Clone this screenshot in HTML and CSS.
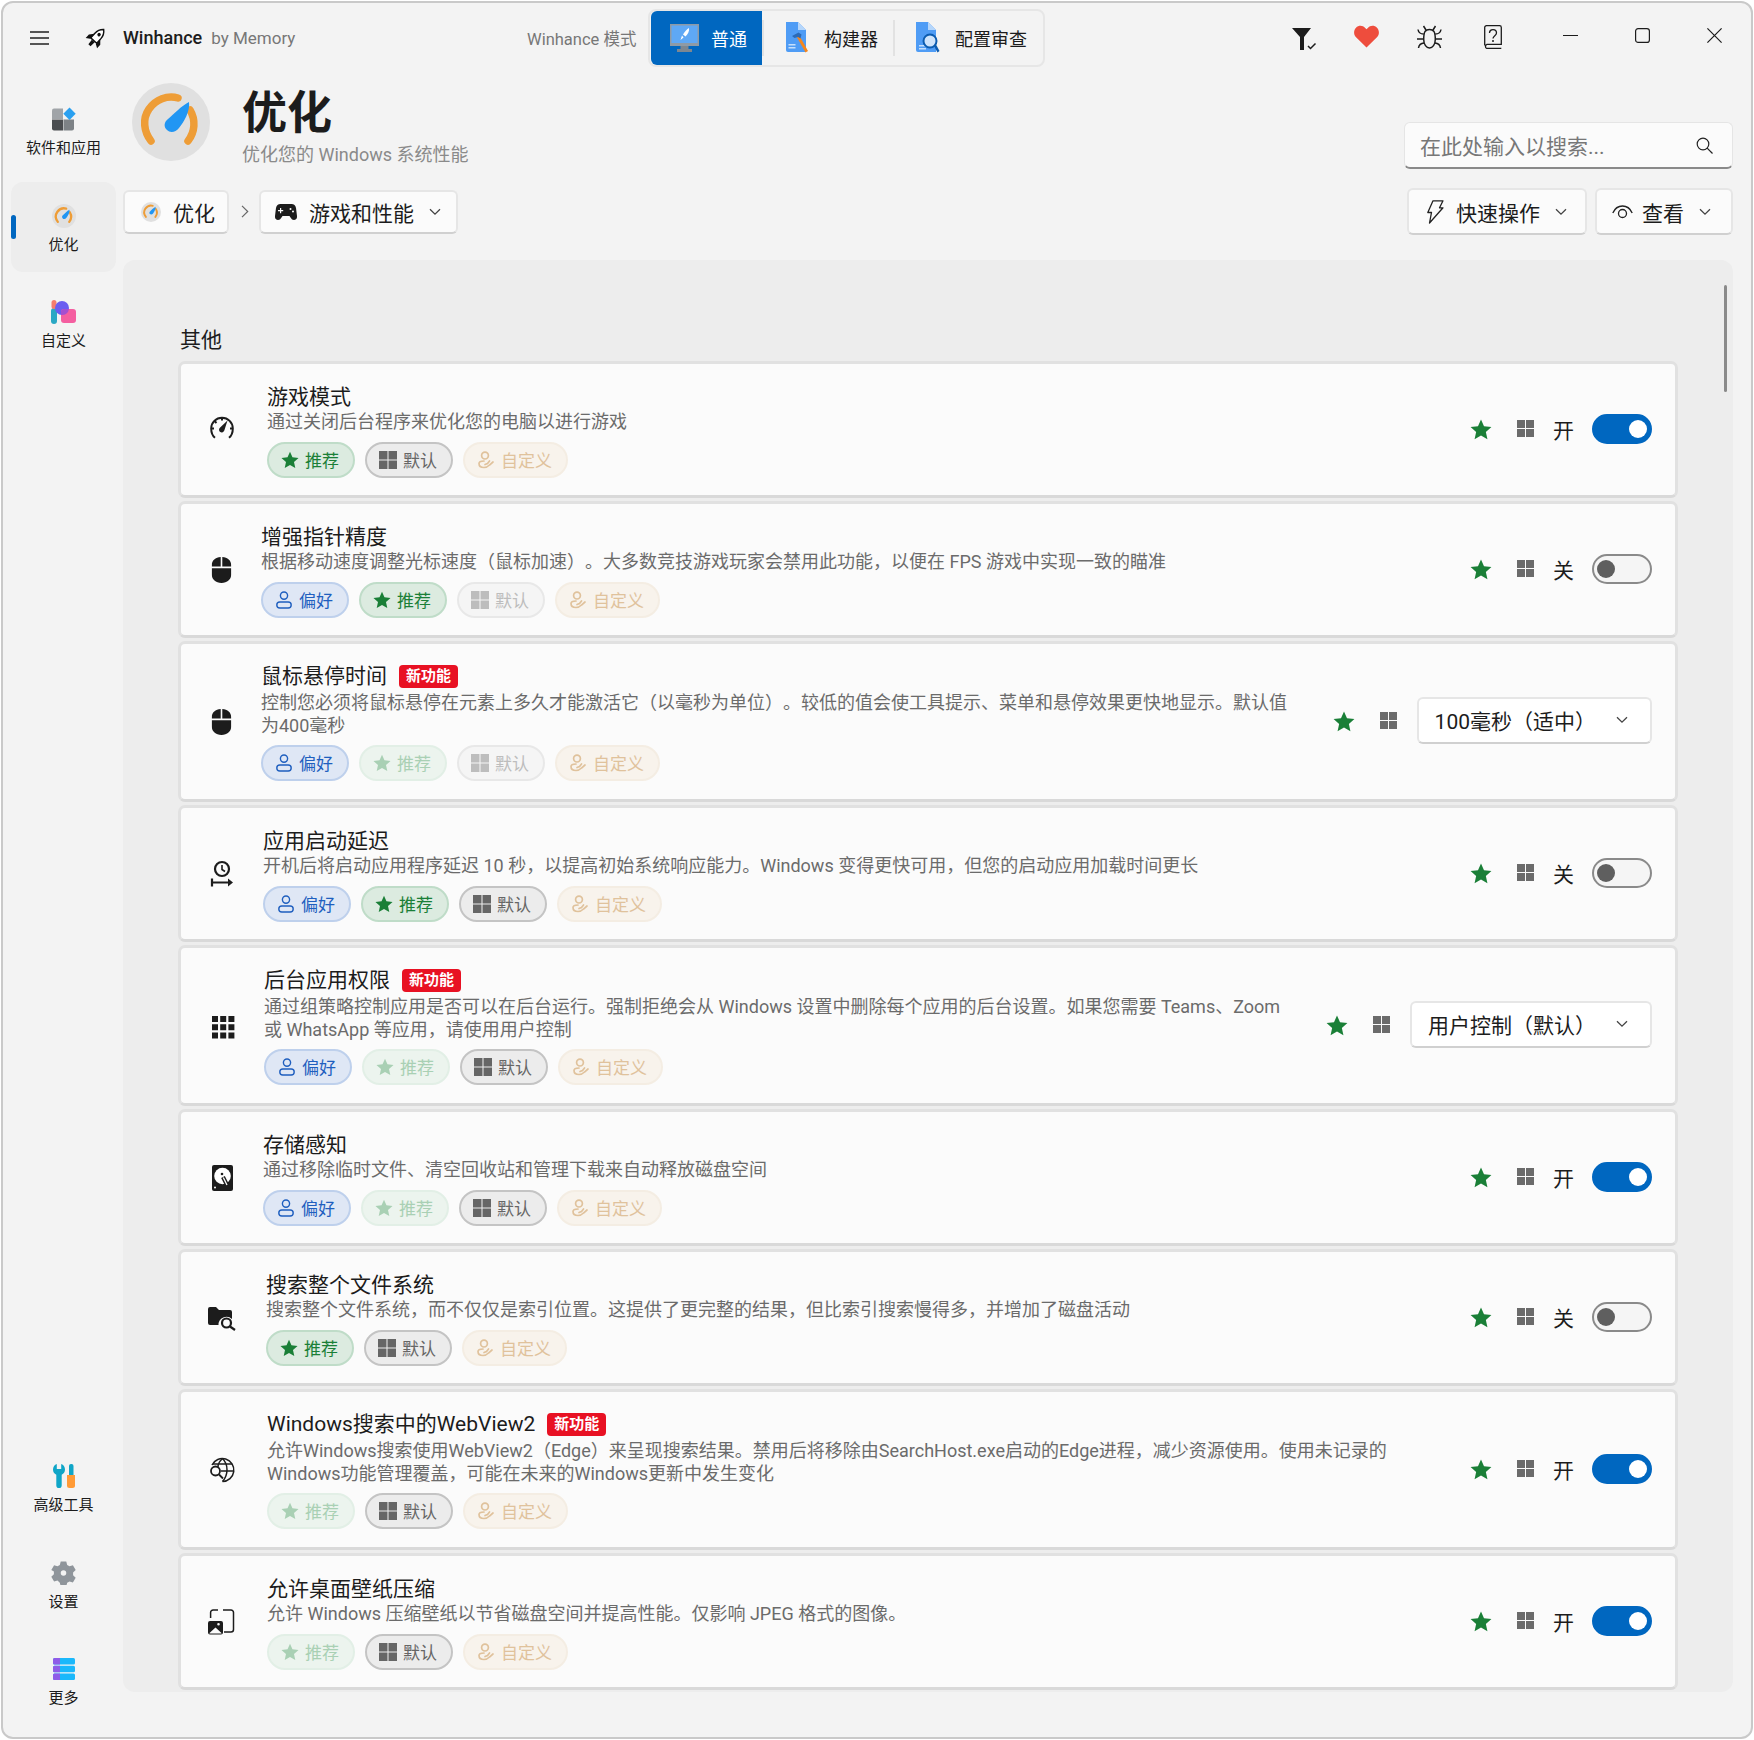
FILE: index.html
```html
<!DOCTYPE html>
<html lang="zh-CN">

<head>
    <meta charset="UTF-8">
    <meta name="viewport" content="width=device-width, initial-scale=1.0">
    <title>Winhance</title>
    <link rel="stylesheet" href="styles.css">
</head>

<body>
    <!-- Icônes réutilisées -->
    <svg class="sprite" aria-hidden="true">
        <symbol id="i-star" viewBox="0 0 24 23"><path fill="currentColor" d="M12 .5l3.290 7.470 8.120.82-6.080 5.440 1.720 7.980L12 18.100l-7.050 4.110 1.720-7.980L.59 8.790l8.120-.82z"/></symbol>
        <symbol id="i-grid" viewBox="0 0 17 17"><path fill="currentColor" d="M0 0h8v8H0zM9 0h8v8H9zM0 9h8v8H0zM9 9h8v8H9z"/></symbol>
        <symbol id="i-person" viewBox="0 0 18 18"><g fill="none" stroke="currentColor" stroke-width="1.400"><circle cx="9" cy="4.600" r="3.600"/><rect x="1.800" y="11" width="14.400" height="6" rx="3"/></g></symbol>
        <symbol id="i-custom" viewBox="0 0 18 18"><g fill="none" stroke="currentColor" stroke-width="1.700" stroke-linecap="round"><circle cx="8" cy="4.600" r="3.400"/><path d="M2 12.500c0-2 2.500-2.500 5-2.500M2 12.500c0 2.500 2 4 5 4 3 0 4-1 5.500-2.500l3.500-3"/><path d="M8 13.500l2.500-1 2-2.500"/></g></symbol>
        <symbol id="i-chev" viewBox="0 0 12 8"><path fill="none" stroke="currentColor" stroke-width="1.300" d="M1 1.200l5 5 5-5"/></symbol>
        <symbol id="i-mouse" viewBox="0 0 20 26"><path fill="currentColor" d="M9.200 0v9.500H.3V8.200C.3 3.500 4 .2 9.200 0zM10.800 0c5.200.2 8.900 3.500 8.900 8.200v1.300h-8.900zM.3 11.200h19.400v6.300c0 4.900-4 8.500-9.700 8.500S.3 22.400.3 17.500z"/></symbol>
        <symbol id="i-gauge" viewBox="0 0 78 78">
            <circle cx="39" cy="39" r="39" fill="#e0e0e0"/>
            <path fill="none" stroke="#ee9d37" stroke-width="7.500" stroke-linecap="round" d="M19 58C12 49 10 36 17 26c7-9.500 18-14 29-11"/>
            <path fill="none" stroke="#ee9d37" stroke-width="7.500" stroke-linecap="round" d="M58 27c6 10 5 22-2 31"/>
            <path fill="#2196f3" d="M57 19c1.300 9-5 20-10 26-3.500 4.500-9 5-12 2-3.500-3-3-8 1-11 6-5 13-13 21-17z"/>
        </symbol>
    </svg>

    <div class="window">
        <!-- Barre de titre -->
        <header class="titlebar">
            <div class="brand">
                <svg class="menu-icon" width="19" height="14" viewBox="0 0 19 14"><path fill="none" stroke="#222" stroke-width="1.300" d="M0 1h19M0 7h19M0 13h19"/></svg>
                <svg class="app-logo" width="23" height="23" viewBox="0 0 24 24">
                    <g transform="rotate(42 12 12)">
                        <path fill="#fff" stroke="#111" stroke-width="1.500" d="M12 .8c3.200 2.700 4.200 6 4.200 9v6.500H7.800V9.800c0-3 1-6.300 4.200-9z"/>
                        <circle cx="12" cy="8" r="1.800" fill="#111"/>
                        <path fill="#111" d="M8 10.500L4 15v5l4-2.500zM16 10.500l4 4.500v5l-4-2.500zM10 17h4l-.5 6h-3z"/>
                    </g>
                </svg>
                <span class="app-name">Winhance</span>
                <span class="app-by">by Memory</span>
            </div>
            <span class="mode-label">Winhance 模式</span>
            <nav class="mode-tabs">
                <a class="mode-tab active">
                    <svg width="29" height="28" viewBox="0 0 29 28">
                        <path fill="#8e9aa6" d="M0 0h29v22H0z"/>
                        <path fill="#5fa8f5" d="M1.500 1.500h26V19h-26z"/>
                        <path fill="#7d8791" d="M10.500 22h8v3h-8zM7 25h15v3H7z"/>
                        <path fill="#fff" d="M19 4c.5 3-1 6-3.500 8.500L13 10.500C15 7.500 17 5 19 4zM12 11.500l1.500 2-3 2.500z"/>
                    </svg>
                    <span>普通</span>
                </a>
                <i class="mode-sep"></i>
                <a class="mode-tab">
                    <svg width="24" height="32" viewBox="0 0 24 32">
                        <path fill="#4f9cf5" d="M1 0h12l8 8v22H3a2 2 0 0 1-2-2z"/>
                        <path fill="#b5d6fb" d="M13 0l8 8h-8z"/>
                        <path fill="#c6dffc" d="M3.500 22h7v1.500h-7zM3.500 25h7v1.500h-7z"/>
                        <path fill="#f7861c" d="M11.500 14.500l2.500-1.500 9 16-2.500 1.500z"/>
                        <path fill="#2c6bb8" d="M7 14l6.500-3.500 3 2-1 4-2.500-1.500-3.500 1z"/>
                    </svg>
                    <span>构建器</span>
                </a>
                <i class="mode-sep"></i>
                <a class="mode-tab">
                    <svg width="24" height="32" viewBox="0 0 24 32">
                        <path fill="#4f9cf5" d="M0 0h12l8 8v22H2a2 2 0 0 1-2-2z"/>
                        <path fill="#b5d6fb" d="M12 0l8 8h-8z"/>
                        <path fill="#c6dffc" d="M3 23h7v1.500H3zM3 26h7v1.500H3z"/>
                        <circle cx="14" cy="19" r="6.500" fill="#cfe4fb" stroke="#0c5cb0" stroke-width="2"/>
                        <path fill="#0c5cb0" d="M18 24l2-1.500 3.500 6.500-2 1.500z"/>
                    </svg>
                    <span>配置审查</span>
                </a>
            </nav>
            <div class="title-tools">
                <span class="tool-btn">
                    <svg class="filter-icon" width="26" height="22" viewBox="0 0 26 22"><path fill="#1c1c1c" d="M0 0h19l-7 9v13H8V9z"/><path fill="none" stroke="#1c1c1c" stroke-width="1.500" d="M16 18l2.500 2.500 5-5"/></svg>
                </span>
                <span class="tool-btn">
                    <svg width="25" height="23" viewBox="0 0 25 23"><path fill="#ee4d3d" d="M12.500 22.500L1.800 12C-.5 9.500-.5 5.200 2 2.700c2.600-2.600 6.800-2.400 9.200.2l1.300 1.400 1.300-1.400c2.400-2.600 6.600-2.800 9.200-.2 2.500 2.500 2.500 6.800.2 9.300z"/></svg>
                </span>
                <span class="tool-btn">
                    <svg width="25" height="24" viewBox="0 0 25 24"><g fill="none" stroke="#1c1c1c" stroke-width="1.500"><path d="M8 6.500c1-1.500 2.500-2 4.500-2s3.500.5 4.500 2c1 1.800 1.300 5 1.300 8 0 5-2.800 8.500-5.800 8.500s-5.800-3.500-5.800-8.500c0-3 .3-6.200 1.300-8z"/><path d="M9 5L6.500 1M16 5l2.500-4M6.700 9C3.500 9 1.500 7.500 1 4.500M18.300 9c3.200 0 5.200-1.500 5.700-4.500M6.500 14H0M18.500 14H25M7 18c-3 .2-5 1.800-5.500 5M18 18c3 .2 5 1.800 5.500 5"/></g></svg>
                </span>
                <span class="tool-btn">
                    <svg width="18" height="24" viewBox="0 0 18 24"><g fill="none" stroke="#1c1c1c" stroke-width="1.300"><path d="M.7 20.500V2.500a1.800 1.800 0 0 1 1.800-1.800h13a1.800 1.800 0 0 1 1.800 1.800v16.800H3a2.200 2.200 0 0 0 0 4.200h14.300"/><path d="M5.500 8c0-4.500 7-4.500 7 0 0 2.500-3.500 2.800-3.500 5.500"/></g><circle cx="9" cy="16" r="1" fill="#1c1c1c"/></svg>
                </span>
            </div>
            <div class="win-controls">
                <span class="win-btn"><svg width="15" height="15" viewBox="0 0 15 15"><path stroke="#1c1c1c" stroke-width="1.200" d="M0 7.500h15"/></svg></span>
                <span class="win-btn"><svg width="15" height="15" viewBox="0 0 15 15"><rect x=".6" y=".6" width="13.800" height="13.800" rx="2.500" fill="none" stroke="#1c1c1c" stroke-width="1.200"/></svg></span>
                <span class="win-btn"><svg width="15" height="15" viewBox="0 0 15 15"><path stroke="#1c1c1c" stroke-width="1.200" d="M.4.400l14.200 14.200M14.600.400L.4 14.600"/></svg></span>
            </div>
        </header>

        <div class="layout">
            <!-- Navigation latérale -->
            <aside class="sidebar">
                <div class="nav-group">
                    <a class="nav-item">
                        <svg width="24" height="23" viewBox="0 0 24 23">
                            <path fill="#a0a4a8" d="M0 3a2 2 0 0 1 2-2h9v10.500H0z"/>
                            <path fill="#4a4d50" d="M0 12h11v11H2a2 2 0 0 1-2-2z"/>
                            <path fill="#7d8286" d="M11.500 12H22v9a2 2 0 0 1-2 2h-8.500z"/>
                            <path fill="#2aa0f0" d="M17.500 0l6.200 6.200-6.200 6.200-6.200-6.200z"/>
                        </svg>
                        <span>软件和应用</span>
                    </a>
                    <a class="nav-item active">
                        <svg width="24" height="24"><use href="#i-gauge"/></svg>
                        <span>优化</span>
                    </a>
                    <a class="nav-item">
                        <svg width="25" height="24" viewBox="0 0 25 24">
                            <rect x="0" y="8" width="6" height="16" rx="3" fill="#2aa8c4"/>
                            <rect x="0.500" y="0" width="5" height="9" rx="2.500" fill="#f47c6e"/>
                            <circle cx="11" cy="8" r="7" fill="#6a5df0"/>
                            <rect x="10" y="9" width="15" height="14" rx="3" fill="#f45ea0"/>
                            <path fill="#a44fd0" d="M10 12a3 3 0 0 1 3-3h5a7 7 0 0 1-8 6z"/>
                        </svg>
                        <span>自定义</span>
                    </a>
                </div>
                <div class="nav-group">
                    <a class="nav-item">
                        <svg width="22" height="24" viewBox="0 0 22 24">
                            <path fill="#0fa5c7" d="M3.800 0v5h4.400V0C10.500.8 12 3 12 5.500c0 2.500-1.300 4.300-3.300 5.200v10.800a2.700 2.700 0 0 1-5.400 0V10.700C1.300 9.800 0 8 0 5.500 0 3 1.500.8 3.800 0z"/>
                            <rect x="16" y="0" width="4.500" height="13" rx="2" fill="#0fa5c7"/>
                            <path fill="#ff9a36" d="M14 11h8v10.500a2.500 2.500 0 0 1-2.500 2.500h-3a2.500 2.500 0 0 1-2.500-2.500z"/>
                        </svg>
                        <span>高级工具</span>
                    </a>
                    <a class="nav-item">
                        <svg width="25" height="26" viewBox="0 0 25 26"><path fill="#8f959b" fill-rule="evenodd" d="M9.500.5h6l1 3.800 2.500 1.400 3.700-1.100 3 5.200-2.800 2.700v2.900l2.800 2.700-3 5.200-3.700-1.100-2.500 1.400-1 3.800h-6l-1-3.800L6 21.200l-3.700 1.100-3-5.200 2.800-2.700v-2.900L-.7 9.800l3-5.200L6 5.700l2.500-1.400zM12.500 10a3 3 0 1 0 0 6 3 3 0 0 0 0-6z"/></svg>
                        <span>设置</span>
                    </a>
                    <a class="nav-item">
                        <svg width="22" height="22" viewBox="0 0 22 22">
                            <rect y="0" width="22" height="6.500" rx="1.500" fill="#1bb8fb"/>
                            <rect y="7.700" width="22" height="6.500" rx="1.500" fill="#1bb8fb"/>
                            <rect y="15.500" width="22" height="6.500" rx="1.500" fill="#1bb8fb"/>
                            <path fill="#8f5be8" d="M1.500 0H7v6.500H1.500A1.500 1.500 0 0 1 0 5V1.500A1.500 1.500 0 0 1 1.500 0zM1.500 7.700H7v6.500H1.500A1.500 1.500 0 0 1 0 12.700V9.200a1.500 1.500 0 0 1 1.500-1.500zM1.500 15.500H7V22H1.500A1.500 1.500 0 0 1 0 20.500V17a1.500 1.500 0 0 1 1.500-1.500z"/>
                        </svg>
                        <span>更多</span>
                    </a>
                </div>
            </aside>

            <main class="main">
                <!-- En-tête de la page -->
                <div class="page-head">
                    <svg class="page-icon" width="78" height="78"><use href="#i-gauge"/></svg>
                    <div class="page-title">
                        <h1>优化</h1>
                        <p>优化您的 Windows 系统性能</p>
                    </div>
                    <div class="search-box">
                        <span>在此处输入以搜索...</span>
                        <svg width="17" height="17" viewBox="0 0 17 17"><g fill="none" stroke="#222" stroke-width="1.200"><circle cx="7" cy="7" r="5.800"/><path d="M11.200 11.200l5.300 5.300"/></g></svg>
                    </div>
                </div>

                <!-- Fil d'Ariane et actions -->
                <div class="toolbar">
                    <a class="crumb crumb-first">
                        <svg width="20" height="20"><use href="#i-gauge"/></svg>
                        <span>优化</span>
                    </a>
                    <svg class="crumb-sep" width="8" height="13" viewBox="0 0 8 13"><path fill="none" stroke="#666" stroke-width="1.200" d="M1 .8l5.700 5.700L1 12.200"/></svg>
                    <a class="crumb">
                        <svg width="22" height="16" viewBox="0 0 22 16"><path fill="#1c1c1c" fill-rule="evenodd" d="M5.500 0h11c2.500 0 4 1.500 4.500 4l1 8c.3 2.500-1.200 4-3 4-1.500 0-2.500-.8-3.500-2.500l-1-1.500h-7l-1 1.500C5.500 15.200 4.500 16 3 16c-1.800 0-3.300-1.500-3-4l1-8c.5-2.500 2-4 4.500-4zM5 4v2H3v1.200h2v2h1.200v-2h2V6h-2V4zm10.500 0a1 1 0 1 0 0 2 1 1 0 0 0 0-2zm2.500 2.500a1 1 0 1 0 0 2 1 1 0 0 0 0-2z"/></svg>
                        <span>游戏和性能</span>
                        <svg class="chev" width="12" height="8"><use href="#i-chev"/></svg>
                    </a>
                    <div class="toolbar-actions">
                        <a class="action-btn">
                            <svg width="17" height="24" viewBox="0 0 17 24"><path fill="none" stroke="#222" stroke-width="1.300" stroke-linejoin="round" d="M6 .8h10l-3.500 7h3.500L2.500 23l2-10.500H.8z"/></svg>
                            <span>快速操作</span>
                            <svg class="chev" width="12" height="8"><use href="#i-chev"/></svg>
                        </a>
                        <a class="action-btn action-view">
                            <svg width="21" height="14" viewBox="0 0 21 14"><g fill="none" stroke="#222" stroke-width="1.300"><path d="M.8 8C3 3 6.500 1 10.500 1s7.500 2 9.700 7"/><circle cx="10.500" cy="8.500" r="4"/></g></svg>
                            <span>查看</span>
                            <svg class="chev" width="12" height="8"><use href="#i-chev"/></svg>
                        </a>
                    </div>
                </div>

                <!-- Liste des réglages -->
                <section class="pane">
                    <i class="scroll-thumb"></i>
                    <h2 class="section-title">其他</h2>

                    <article class="card">
                        <svg class="card-icon" width="29" height="26" viewBox="0 0 29 26"><g fill="none" stroke="#1c1c1c" stroke-width="2"><path d="M7 20.800C4.500 18.800 3.200 15.500 3.200 11.500a10.800 10.800 0 0 1 21.600 0c0 4-1.300 7.300-3.800 9.300"/><path d="M14 1v2.500M3.500 11.500H6M24.500 11.500H22M6.800 4.300l1.700 1.700"/></g><path fill="#1c1c1c" d="M19.500 3.500l-3.200 10a2.700 2.700 0 1 1-4.400-2.800z"/></svg>
                        <div class="card-body">
                            <h3 class="card-title">游戏模式</h3>
                            <p class="card-desc">通过关闭后台程序来优化您的电脑以进行游戏</p>
                            <div class="pills">
                                <span class="pill pill-rec"><svg><use href="#i-star"/></svg>推荐</span>
                                <span class="pill pill-def"><svg><use href="#i-grid"/></svg>默认</span>
                                <span class="pill pill-cus"><svg><use href="#i-custom"/></svg>自定义</span>
                            </div>
                        </div>
                        <svg class="side-star"><use href="#i-star"/></svg>
                        <svg class="side-grid"><use href="#i-grid"/></svg>
                        <span class="state">开</span>
                        <span class="toggle on"></span>
                    </article>

                    <article class="card">
                        <svg class="card-icon" width="23" height="26" viewBox="0 0 23 26"><svg x="3.500" width="20" height="26"><use href="#i-mouse"/></svg></svg>
                        <div class="card-body">
                            <h3 class="card-title">增强指针精度</h3>
                            <p class="card-desc">根据移动速度调整光标速度（鼠标加速）。大多数竞技游戏玩家会禁用此功能，以便在 FPS 游戏中实现一致的瞄准</p>
                            <div class="pills">
                                <span class="pill pill-pref"><svg><use href="#i-person"/></svg>偏好</span>
                                <span class="pill pill-rec"><svg><use href="#i-star"/></svg>推荐</span>
                                <span class="pill pill-def off"><svg><use href="#i-grid"/></svg>默认</span>
                                <span class="pill pill-cus"><svg><use href="#i-custom"/></svg>自定义</span>
                            </div>
                        </div>
                        <svg class="side-star"><use href="#i-star"/></svg>
                        <svg class="side-grid"><use href="#i-grid"/></svg>
                        <span class="state">关</span>
                        <span class="toggle"></span>
                    </article>

                    <article class="card">
                        <svg class="card-icon" width="23" height="26" viewBox="0 0 23 26"><svg x="3.500" width="20" height="26"><use href="#i-mouse"/></svg></svg>
                        <div class="card-body">
                            <h3 class="card-title has-badge">鼠标悬停时间<span class="badge">新功能</span></h3>
                            <p class="card-desc">控制您必须将鼠标悬停在元素上多久才能激活它（以毫秒为单位）。较低的值会使工具提示、菜单和悬停效果更快地显示。默认值<br>为400毫秒</p>
                            <div class="pills">
                                <span class="pill pill-pref"><svg><use href="#i-person"/></svg>偏好</span>
                                <span class="pill pill-rec off"><svg><use href="#i-star"/></svg>推荐</span>
                                <span class="pill pill-def off"><svg><use href="#i-grid"/></svg>默认</span>
                                <span class="pill pill-cus"><svg><use href="#i-custom"/></svg>自定义</span>
                            </div>
                        </div>
                        <svg class="side-star"><use href="#i-star"/></svg>
                        <svg class="side-grid before-select"><use href="#i-grid"/></svg>
                        <div class="select">
                            <span>100毫秒（适中）</span>
                            <svg class="chev" width="12" height="8"><use href="#i-chev"/></svg>
                        </div>
                    </article>

                    <article class="card">
                        <svg class="card-icon" width="25" height="26" viewBox="0 0 25 26"><g fill="none" stroke="#1c1c1c"><circle cx="14" cy="8" r="7" stroke-width="2.200"/><path stroke-width="1.600" d="M14 4v4.500l3 2"/><path stroke-width="2.200" d="M4 21.500h19M4 17.500v8"/></g><path fill="#1c1c1c" d="M20 17.500l5 4-5 4z"/></svg>
                        <div class="card-body">
                            <h3 class="card-title">应用启动延迟</h3>
                            <p class="card-desc">开机后将启动应用程序延迟 10 秒，以提高初始系统响应能力。Windows 变得更快可用，但您的启动应用加载时间更长</p>
                            <div class="pills">
                                <span class="pill pill-pref"><svg><use href="#i-person"/></svg>偏好</span>
                                <span class="pill pill-rec"><svg><use href="#i-star"/></svg>推荐</span>
                                <span class="pill pill-def"><svg><use href="#i-grid"/></svg>默认</span>
                                <span class="pill pill-cus"><svg><use href="#i-custom"/></svg>自定义</span>
                            </div>
                        </div>
                        <svg class="side-star"><use href="#i-star"/></svg>
                        <svg class="side-grid"><use href="#i-grid"/></svg>
                        <span class="state">关</span>
                        <span class="toggle"></span>
                    </article>

                    <article class="card">
                        <svg class="card-icon" width="26" height="26" viewBox="0 0 26 26"><path fill="#1c1c1c" d="M4 3h6v6H4zM12.200 3h6v6h-6zM20.400 3h6v6h-6zM4 11.200h6v6H4zM12.200 11.200h6v6h-6zM20.400 11.200h6v6h-6zM4 19.400h6v6H4zM12.200 19.400h6v6h-6zM20.400 19.400h6v6h-6z"/></svg>
                        <div class="card-body">
                            <h3 class="card-title has-badge">后台应用权限<span class="badge">新功能</span></h3>
                            <p class="card-desc">通过组策略控制应用是否可以在后台运行。强制拒绝会从 Windows 设置中删除每个应用的后台设置。如果您需要 Teams、Zoom<br>或 WhatsApp 等应用，请使用用户控制</p>
                            <div class="pills">
                                <span class="pill pill-pref"><svg><use href="#i-person"/></svg>偏好</span>
                                <span class="pill pill-rec off"><svg><use href="#i-star"/></svg>推荐</span>
                                <span class="pill pill-def"><svg><use href="#i-grid"/></svg>默认</span>
                                <span class="pill pill-cus"><svg><use href="#i-custom"/></svg>自定义</span>
                            </div>
                        </div>
                        <svg class="side-star"><use href="#i-star"/></svg>
                        <svg class="side-grid before-select"><use href="#i-grid"/></svg>
                        <div class="select">
                            <span>用户控制（默认）</span>
                            <svg class="chev" width="12" height="8"><use href="#i-chev"/></svg>
                        </div>
                    </article>

                    <article class="card">
                        <svg class="card-icon" width="25" height="26" viewBox="0 0 25 26"><rect x="4" width="21" height="26" rx="2" fill="#1c1c1c"/><circle cx="14.500" cy="11" r="8.300" fill="#fff"/><circle cx="14" cy="9" r="1.300" fill="#1c1c1c"/><path stroke="#1c1c1c" stroke-width="4" d="M15 12l4 8"/><path stroke="#fff" stroke-width="1.300" d="M15.300 12.500l3.700 7.500"/><circle cx="7" cy="22.500" r="1" fill="#fff"/></svg>
                        <div class="card-body">
                            <h3 class="card-title">存储感知</h3>
                            <p class="card-desc">通过移除临时文件、清空回收站和管理下载来自动释放磁盘空间</p>
                            <div class="pills">
                                <span class="pill pill-pref"><svg><use href="#i-person"/></svg>偏好</span>
                                <span class="pill pill-rec off"><svg><use href="#i-star"/></svg>推荐</span>
                                <span class="pill pill-def"><svg><use href="#i-grid"/></svg>默认</span>
                                <span class="pill pill-cus"><svg><use href="#i-custom"/></svg>自定义</span>
                            </div>
                        </div>
                        <svg class="side-star"><use href="#i-star"/></svg>
                        <svg class="side-grid"><use href="#i-grid"/></svg>
                        <span class="state">开</span>
                        <span class="toggle on"></span>
                    </article>

                    <article class="card">
                        <svg class="card-icon" width="28" height="26" viewBox="0 0 28 26"><path fill="#1c1c1c" d="M0 4a2 2 0 0 1 2-2h6l3 3h11a2 2 0 0 1 2 2v7a8 8 0 0 0-13.500 6H2a2 2 0 0 1-2-2z"/><g fill="none" stroke="#1c1c1c" stroke-width="2.200"><circle cx="18.500" cy="18" r="4.500"/><path d="M22 21.500l5 3.500"/></g></svg>
                        <div class="card-body">
                            <h3 class="card-title">搜索整个文件系统</h3>
                            <p class="card-desc">搜索整个文件系统，而不仅仅是索引位置。这提供了更完整的结果，但比索引搜索慢得多，并增加了磁盘活动</p>
                            <div class="pills">
                                <span class="pill pill-rec"><svg><use href="#i-star"/></svg>推荐</span>
                                <span class="pill pill-def"><svg><use href="#i-grid"/></svg>默认</span>
                                <span class="pill pill-cus"><svg><use href="#i-custom"/></svg>自定义</span>
                            </div>
                        </div>
                        <svg class="side-star"><use href="#i-star"/></svg>
                        <svg class="side-grid"><use href="#i-grid"/></svg>
                        <span class="state">关</span>
                        <span class="toggle"></span>
                    </article>

                    <article class="card">
                        <svg class="card-icon" width="29" height="26" viewBox="0 0 29 26"><g fill="none" stroke="#1c1c1c" stroke-width="1.500"><path d="M4 8A11.500 11.500 0 1 1 14.500 24.500"/><path d="M5 7h19M13 14h13M14.500 1.500C10.500 5 10 9 10 10M14.500 1.500c6 6 6 16 0 23"/></g><g fill="none" stroke="#1c1c1c" stroke-width="1.800"><circle cx="7.500" cy="14" r="4.500"/><path d="M11 17.500l4 4"/></g></svg>
                        <div class="card-body">
                            <h3 class="card-title has-badge">Windows搜索中的WebView2<span class="badge">新功能</span></h3>
                            <p class="card-desc">允许Windows搜索使用WebView2（Edge）来呈现搜索结果。禁用后将移除由SearchHost.exe启动的Edge进程，减少资源使用。使用未记录的<br>Windows功能管理覆盖，可能在未来的Windows更新中发生变化</p>
                            <div class="pills">
                                <span class="pill pill-rec off"><svg><use href="#i-star"/></svg>推荐</span>
                                <span class="pill pill-def"><svg><use href="#i-grid"/></svg>默认</span>
                                <span class="pill pill-cus"><svg><use href="#i-custom"/></svg>自定义</span>
                            </div>
                        </div>
                        <svg class="side-star"><use href="#i-star"/></svg>
                        <svg class="side-grid"><use href="#i-grid"/></svg>
                        <span class="state">开</span>
                        <span class="toggle on"></span>
                    </article>

                    <article class="card">
                        <svg class="card-icon" width="29" height="26" viewBox="0 0 29 26"><g fill="none" stroke="#1c1c1c" stroke-width="1.500"><path d="M2.600 9V3.500A2.500 2.500 0 0 1 5.100 1H10M15 1h8a2.500 2.500 0 0 1 2.500 2.500v17a2.500 2.500 0 0 1-2.500 2.500h-7"/></g><path fill="#1c1c1c" fill-rule="evenodd" d="M2 12h11a2 2 0 0 1 2 2v9.500a2 2 0 0 1-2 2H2a2 2 0 0 1-2-2V14a2 2 0 0 1 2-2zm8.500 2a1.300 1.300 0 1 0 0 2.600 1.300 1.300 0 0 0 0-2.600zM7.500 18.500L1.500 24v.5h12V24z"/></svg>
                        <div class="card-body">
                            <h3 class="card-title">允许桌面壁纸压缩</h3>
                            <p class="card-desc">允许 Windows 压缩壁纸以节省磁盘空间并提高性能。仅影响 JPEG 格式的图像。</p>
                            <div class="pills">
                                <span class="pill pill-rec off"><svg><use href="#i-star"/></svg>推荐</span>
                                <span class="pill pill-def"><svg><use href="#i-grid"/></svg>默认</span>
                                <span class="pill pill-cus"><svg><use href="#i-custom"/></svg>自定义</span>
                            </div>
                        </div>
                        <svg class="side-star"><use href="#i-star"/></svg>
                        <svg class="side-grid"><use href="#i-grid"/></svg>
                        <span class="state">开</span>
                        <span class="toggle on"></span>
                    </article>
                </section>
            </main>
        </div>
    </div>
</body>

</html>
```
FILE: styles.css
```css
/* Page */
* {
    box-sizing: border-box;
}

body {
    margin: 0;
    padding: 1px;
    background-color: #fff;
    color: #1c1c1c;
    font-family: Roboto, "Noto Sans CJK SC", sans-serif;
    text-spacing-trim: space-all;
}

h1,
h2,
h3,
p {
    margin: 0;
    font-weight: normal;
}

.sprite {
    display: none;
}

.window {
    width: 1752px;
    height: 1738px;
    border: 2px solid #c9c9c9;
    border-radius: 12px;
    background-color: #f3f3f3;
    overflow: hidden;
}

/* Barre de titre */
.titlebar {
    display: flex;
    align-items: center;
    height: 69px;
}

.brand {
    display: flex;
    align-items: center;
    width: 524px;
    padding-left: 27px;
}

.app-logo {
    margin-left: 36px;
}

.app-name {
    margin-left: 15px;
    font-size: 18px;
    font-weight: 500;
}

.app-by {
    margin-left: 9px;
    font-size: 17px;
    color: #777;
}

.mode-label {
    width: 121px;
    font-size: 16.5px;
    color: #777;
}

.mode-tabs {
    display: flex;
    align-items: center;
    height: 58px;
    padding: 0 1px;
    border: 2px solid #e6e6e6;
    border-radius: 8px;
}

.mode-tab {
    display: flex;
    align-items: center;
    gap: 15px;
    height: 100%;
    padding: 0 15px 0 21px;
    font-size: 18px;
}

.mode-tab.active {
    gap: 12px;
    padding: 0 15px 0 19px;
    border-radius: 6px 0 0 6px;
    background-color: #0067c0;
    color: #fff;
}

.mode-sep {
    width: 2px;
    height: 36px;
    background-color: #e2e2e2;
}

.title-tools {
    display: flex;
    margin-left: auto;
}

.tool-btn {
    display: flex;
    justify-content: center;
    width: 63px;
}

.filter-icon {
    margin: 3px 0 0 3px;
}

.win-controls {
    display: flex;
    margin: 0 1px 0 10px;
}

.win-btn {
    display: flex;
    justify-content: center;
    width: 72px;
    margin-top: -4px;
}

/* Navigation latérale */
.layout {
    display: flex;
    height: 1665px;
}

.sidebar {
    display: flex;
    flex-direction: column;
    justify-content: space-between;
    width: 120px;
    flex-shrink: 0;
    padding: 13px 7px 12px 8px;
}

.nav-group {
    display: flex;
    flex-direction: column;
    gap: 6.5px;
}

.nav-item {
    position: relative;
    display: flex;
    flex-direction: column;
    align-items: center;
    height: 90px;
    padding-top: 22px;
    border-radius: 12px;
    font-size: 15px;
    line-height: 20px;
}

.nav-item svg {
    height: 24px;
    margin-bottom: 7px;
}

.nav-item.active {
    background-color: #ededed;
}

.nav-item.active::before {
    content: "";
    position: absolute;
    left: 0;
    top: 33px;
    width: 5px;
    height: 24px;
    border-radius: 3px;
    background-color: #0067c0;
}

/* En-tête */
.main {
    flex: 1;
    min-width: 0;
    padding-right: 18px;
}

.page-head {
    display: flex;
    align-items: flex-start;
    height: 116px;
    padding-left: 9px;
}

.page-icon {
    margin-top: 11px;
    flex-shrink: 0;
}

.page-title {
    margin-left: 32px;
    padding-top: 15px;
}

.page-title h1 {
    font-size: 45px;
    line-height: 54px;
    font-weight: bold;
}

.page-title p {
    margin-top: 2px;
    font-size: 18px;
    line-height: 24px;
    color: #8a8a8a;
}

.search-box {
    display: flex;
    align-items: center;
    justify-content: space-between;
    width: 329px;
    height: 47px;
    margin: 50px 0 0 auto;
    padding: 0 19px 0 15px;
    border: 1px solid #e5e5e5;
    border-bottom: 2px solid #8a8a8a;
    border-radius: 6px;
    background-color: #fbfbfb;
    font-size: 21px;
    color: #777;
}

/* Fil d'Ariane */
.toolbar {
    display: flex;
    align-items: center;
    height: 47px;
    margin-bottom: 25px;
}

.crumb {
    display: flex;
    align-items: center;
    height: 44px;
    padding: 0 15px 0 14px;
    border: 2px solid #e6e6e6;
    border-bottom-color: #d0d0d0;
    border-radius: 6px;
    background-color: #fbfbfb;
    font-size: 21px;
}

.crumb-first {
    gap: 12px;
    padding: 0 12px 0 16px;
}

.crumb > span {
    margin: 0 15px 0 12px;
}

.crumb-first > span {
    margin: 0;
}

.crumb-sep {
    margin: 0 10px 0 12px;
}

.toolbar-actions {
    display: flex;
    gap: 8px;
    margin-left: auto;
}

.action-btn {
    display: flex;
    align-items: center;
    width: 180px;
    height: 47px;
    padding-left: 18px;
    border: 2px solid #e6e6e6;
    border-bottom-color: #d0d0d0;
    border-radius: 6px;
    background-color: #fbfbfb;
    font-size: 21px;
}

.action-view {
    width: 138px;
    padding-left: 15px;
}

.action-btn > span {
    margin: 0 15px 0 12px;
}

.action-view > span {
    margin: 0 15px 0 9px;
}

/* Liste des réglages */
.pane {
    position: relative;
    height: 1432px;
    padding: 65px 55px 0;
    border-radius: 12px;
    background-color: #ededed;
}

.scroll-thumb {
    position: absolute;
    right: 6px;
    top: 25px;
    width: 3px;
    height: 107px;
    border-radius: 2px;
    background-color: #8a8a8a;
}

.section-title {
    margin: 0 0 6px 2px;
    font-size: 21px;
    line-height: 30px;
}

.card {
    display: flex;
    align-items: center;
    margin-bottom: 3px;
    padding: 18px 23px 17.5px 27px;
    border: 3px solid #e1e1e1;
    border-bottom-color: #d9d9d9;
    border-radius: 7px;
    background-color: #fbfbfb;
}

.card-icon {
    flex-shrink: 0;
    margin-right: 30px;
    overflow: visible;
}

.card-body {
    flex: 1;
    min-width: 0;
}

.card-title {
    display: flex;
    align-items: center;
    height: 27.5px;
    padding-top: 2px;
    font-size: 21px;
    line-height: 26px;
}

.card-title.has-badge {
    height: 28.5px;
    padding-top: 0;
}

.badge {
    margin-left: 12px;
    padding: 0 7px;
    border-radius: 4px;
    background-color: #e81123;
    color: #fff;
    font-size: 15px;
    line-height: 23px;
    font-weight: bold;
}

.card-desc {
    font-size: 18px;
    line-height: 23px;
    color: #6b6b6b;
}

/* Pastilles */
.pills {
    display: flex;
    gap: 10px;
    margin-top: 9px;
}

.has-badge ~ .pills {
    margin: 8px 0 1px;
}

.pill {
    display: flex;
    align-items: center;
    gap: 6px;
    height: 36px;
    padding: 0 14px 0 12px;
    border: 2px solid;
    border-radius: 18px;
    font-size: 17px;
}

.pill svg {
    width: 18px;
    height: 18px;
}

.pill-rec {
    border-color: #bfdcc8;
    background-color: #dcebe0;
    color: #1a7f37;
}

.pill-rec.off {
    border-color: #e2efe6;
    background-color: #ecf4ee;
    color: #a9d0b4;
}

.pill-def {
    border-color: #c4c4c4;
    background-color: #ececec;
    color: #666;
}

.pill-def.off {
    border-color: #e8e8e8;
    background-color: #f5f5f5;
    color: #bdbdbd;
}

.pill-pref {
    border-color: #bed0ec;
    background-color: #dfe7f5;
    color: #1f5fbf;
}

.pill-cus {
    border-color: #f4ede3;
    background-color: #f8f3ec;
    color: #e0c29c;
}

/* Contrôles à droite */
.side-star {
    flex-shrink: 0;
    width: 22px;
    height: 21px;
    margin-right: 25px;
    color: #1a7f37;
}

.side-grid {
    flex-shrink: 0;
    width: 17px;
    height: 17px;
    margin: -2px 19px 0 0;
    color: #6b6b6b;
}

.side-grid.before-select {
    margin-right: 20px;
}

.state {
    width: 21px;
    margin: 3px 18px 0 0;
    font-size: 21px;
    line-height: 30px;
}

.toggle {
    position: relative;
    flex-shrink: 0;
    width: 60px;
    height: 30px;
    margin-top: -2px;
    border: 2px solid #8a8a8a;
    border-radius: 15px;
    background-color: #f5f5f5;
}

.toggle::after {
    content: "";
    position: absolute;
    left: 3px;
    top: 4px;
    width: 18px;
    height: 18px;
    border-radius: 50%;
    background-color: #5f5f5f;
}

.toggle.on {
    border-color: #0067c0;
    background-color: #0067c0;
}

.toggle.on::after {
    left: 35px;
    background-color: #fff;
}

.select {
    display: flex;
    align-items: center;
    flex-shrink: 0;
    height: 47px;
    margin-top: -2px;
    padding: 0 22px 2px 16px;
    border: 2px solid #e6e6e6;
    border-bottom-color: #d0d0d0;
    border-radius: 6px;
    background-color: #fff;
    font-size: 21px;
}

.select > span {
    margin-right: 20px;
}

.chev {
    flex-shrink: 0;
    color: #444;
}
```
